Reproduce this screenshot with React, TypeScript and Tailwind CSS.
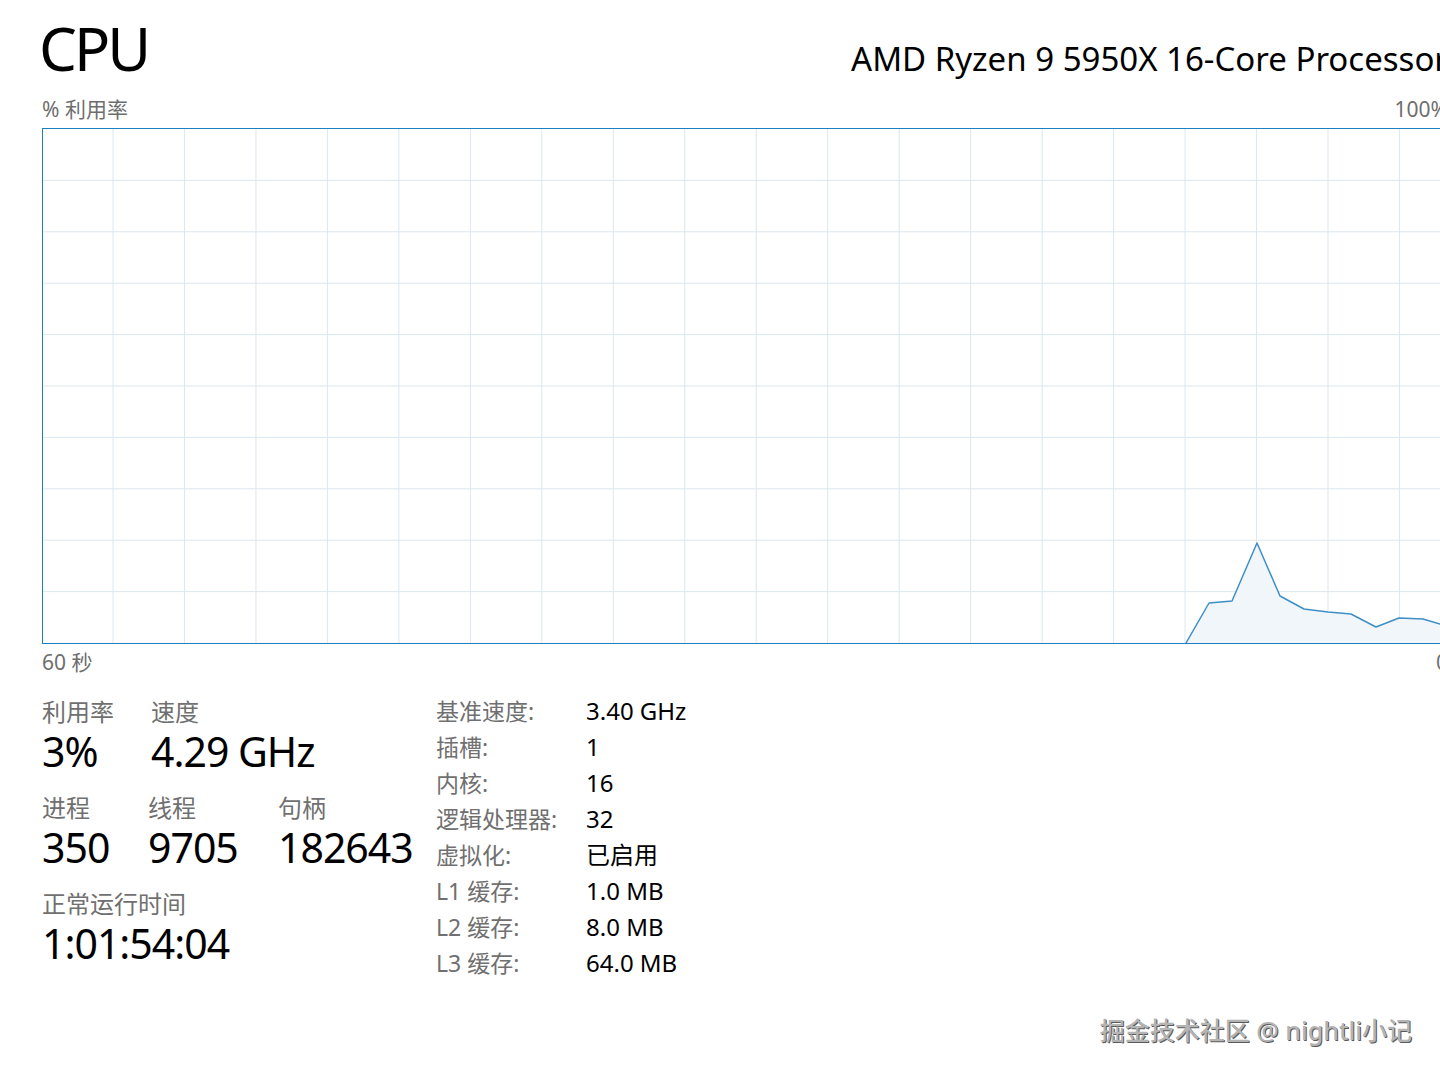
const gridX = Array.from({ length: 19 }, (_, i) => 70 + i * 71.47);
const gridY = Array.from({ length: 9 }, (_, i) => 51.4 * (i + 1));

const samples: [number, number][] = [
  [1143, 514],
  [1166, 474],
  [1189, 472],
  [1214, 414],
  [1237, 467],
  [1261, 480],
  [1285, 483],
  [1308, 485],
  [1333, 498],
  [1356, 489],
  [1380, 490],
  [1397, 495],
  [1406, 497],
];

const UsageChart = () => {
  const line = samples.map(([x, y]) => `${x},${y}`).join(" ");
  const area = `${line} 1406,514 1143,514`;
  return (
    <div className="border border-[#1c7fbe] w-[1408px] h-[516px]">
      <svg width="1406" height="514" viewBox="0 0 1406 514" className="block">
        {gridX.map((x) => (
          <line key={`x${x}`} x1={x} y1={0} x2={x} y2={514} stroke="#dce7ef" strokeWidth="1" />
        ))}
        {gridY.map((y) => (
          <line key={`y${y}`} x1={0} y1={y} x2={1406} y2={y} stroke="#dce7ef" strokeWidth="1" />
        ))}
        <polygon points={area} fill="#f1f6fb" />
        <polyline points={line} fill="none" stroke="#3f8fc6" strokeWidth="1.5" strokeLinejoin="round" />
      </svg>
    </div>
  );
};

const specs = [
  ["基准速度:", "3.40 GHz"],
  ["插槽:", "1"],
  ["内核:", "16"],
  ["逻辑处理器:", "32"],
  ["虚拟化:", "已启用"],
  ["L1 缓存:", "1.0 MB"],
  ["L2 缓存:", "8.0 MB"],
  ["L3 缓存:", "64.0 MB"],
];

const Stat = ({ label, value }: { label: string; value: string }) => (
  <div className="flex flex-col">
    <span className="text-[24px] leading-[32px] text-[#707070] whitespace-nowrap">{label}</span>
    <span className="mt-[1px] text-[41px] leading-[44px] tracking-[-1px] text-black whitespace-nowrap">
      {value}
    </span>
  </div>
);

export default function App() {
  return (
    <div
      className="relative w-[1440px] h-[1073px] overflow-hidden bg-white"
      style={{ fontFamily: '"Noto Sans", "Noto Sans CJK SC", sans-serif' }}
    >
      <div className="w-[1448px] pl-[42px]">
        <div className="flex items-baseline justify-between pt-[17px] h-[79px]">
          <span className="text-[60px] leading-[62px] tracking-[-3px] text-black -ml-[3px]">CPU</span>
          <span className="text-[33px] leading-[40px] text-black whitespace-nowrap">
            AMD Ryzen 9 5950X 16-Core Processor
          </span>
        </div>
        <div className="flex justify-between items-center mt-[18px] h-[24px] text-[21px] leading-[24px] text-[#6e6e6e]">
          <span>% 利用率</span>
          <span>100%</span>
        </div>
        <div className="mt-[7px]">
          <UsageChart />
        </div>
        <div className="flex justify-between h-[36px] items-center text-[21px] leading-[24px] text-[#6e6e6e]">
          <span>60 秒</span>
          <span>0</span>
        </div>

        <div className="flex mt-[16px]">
          <div className="w-[394px] flex flex-col gap-[19px]">
            <div className="grid grid-cols-[109px_1fr]">
              <Stat label="利用率" value="3%" />
              <Stat label="速度" value="4.29 GHz" />
            </div>
            <div className="grid grid-cols-[106px_130px_1fr]">
              <Stat label="进程" value="350" />
              <Stat label="线程" value="9705" />
              <Stat label="句柄" value="182643" />
            </div>
            <Stat label="正常运行时间" value="1:01:54:04" />
          </div>

          <div className="-mt-[3px] grid grid-cols-[150px_1fr] leading-[36px]">
            {specs.map(([k, v]) => (
              <div key={k} className="contents">
                <span className="text-[23px] text-[#707070] whitespace-nowrap">{k}</span>
                <span className="text-[24px] text-black whitespace-nowrap">{v}</span>
              </div>
            ))}
          </div>
        </div>
      </div>

      <div className="absolute right-[28px] top-[1014px] text-[25px] leading-[32px] font-medium text-[#b4b4b4] [text-shadow:1px_1px_0_#5a5a5a,-1px_-1px_0_#ffffff]">
        掘金技术社区 @ nightli小记
      </div>
    </div>
  );
}
